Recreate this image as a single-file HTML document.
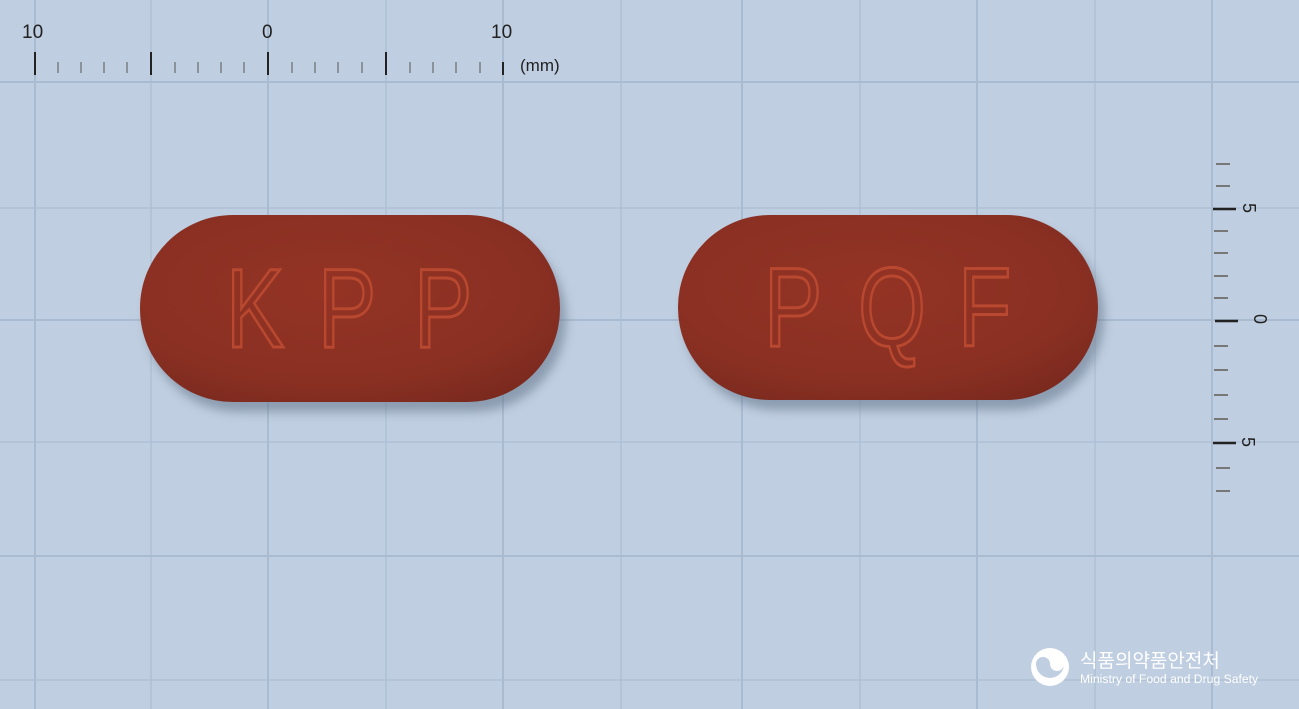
<!DOCTYPE html>
<html><head><meta charset="utf-8"><style>
html,body{margin:0;padding:0;width:1299px;height:709px;overflow:hidden;background:#bfcee0;}
svg{display:block}
</style></head><body>
<svg width="1299" height="709" viewBox="0 0 1299 709" xmlns="http://www.w3.org/2000/svg">
<defs>
<radialGradient id="pg" cx="0.45" cy="0.4" r="0.7">
<stop offset="0" stop-color="#933324"/><stop offset="0.7" stop-color="#8a3023"/><stop offset="1" stop-color="#7a291e"/>
</radialGradient>
<filter id="sh" x="-10%" y="-20%" width="120%" height="150%"><feGaussianBlur stdDeviation="5"/></filter>
</defs>
<g stroke="#a9bbd0" stroke-width="2">
<line x1="35" y1="0" x2="35" y2="709"/><line x1="151" y1="0" x2="151" y2="709" stroke-width="1"/>
<line x1="268" y1="0" x2="268" y2="709"/><line x1="386" y1="0" x2="386" y2="709" stroke-width="1"/>
<line x1="503" y1="0" x2="503" y2="709"/><line x1="621" y1="0" x2="621" y2="709" stroke-width="1"/>
<line x1="742" y1="0" x2="742" y2="709"/><line x1="860" y1="0" x2="860" y2="709" stroke-width="1"/>
<line x1="977" y1="0" x2="977" y2="709"/><line x1="1095" y1="0" x2="1095" y2="709" stroke-width="1"/>
<line x1="1212" y1="0" x2="1212" y2="709"/>
<line x1="0" y1="82" x2="1299" y2="82"/><line x1="0" y1="208" x2="1299" y2="208" stroke-width="1"/>
<line x1="0" y1="320" x2="1299" y2="320"/><line x1="0" y1="442" x2="1299" y2="442" stroke-width="1"/>
<line x1="0" y1="556" x2="1299" y2="556"/><line x1="0" y1="680" x2="1299" y2="680" stroke-width="1"/>
</g>
<g font-family="Liberation Sans, sans-serif" font-size="19" fill="#222">
<text x="22" y="38">10</text><text x="262" y="38">0</text><text x="491" y="38">10</text>
<text x="520" y="71" font-size="17">(mm)</text>
</g>
<g stroke="#222" stroke-width="2">
<line x1="35" y1="52" x2="35" y2="75"/><line x1="151" y1="52" x2="151" y2="75"/><line x1="268" y1="52" x2="268" y2="75"/><line x1="386" y1="52" x2="386" y2="75"/><line x1="503" y1="62" x2="503" y2="75"/>
</g>
<g stroke="#555" stroke-width="1">
<line x1="58" y1="62" x2="58" y2="73"/><line x1="81" y1="62" x2="81" y2="73"/><line x1="104" y1="62" x2="104" y2="73"/><line x1="127" y1="62" x2="127" y2="73"/>
<line x1="175" y1="62" x2="175" y2="73"/><line x1="198" y1="62" x2="198" y2="73"/><line x1="221" y1="62" x2="221" y2="73"/><line x1="244" y1="62" x2="244" y2="73"/>
<line x1="292" y1="62" x2="292" y2="73"/><line x1="315" y1="62" x2="315" y2="73"/><line x1="338" y1="62" x2="338" y2="73"/><line x1="362" y1="62" x2="362" y2="73"/>
<line x1="410" y1="62" x2="410" y2="73"/><line x1="433" y1="62" x2="433" y2="73"/><line x1="456" y1="62" x2="456" y2="73"/><line x1="480" y1="62" x2="480" y2="73"/>
</g>
<g stroke="#777" stroke-width="2">
<line x1="1216" y1="164" x2="1230" y2="164"/><line x1="1216" y1="186" x2="1230" y2="186"/>
<line x1="1214" y1="231" x2="1228" y2="231"/><line x1="1214" y1="253" x2="1228" y2="253"/><line x1="1214" y1="276" x2="1228" y2="276"/><line x1="1214" y1="298" x2="1228" y2="298"/>
<line x1="1214" y1="346" x2="1228" y2="346"/><line x1="1214" y1="370" x2="1228" y2="370"/><line x1="1214" y1="395" x2="1228" y2="395"/><line x1="1214" y1="419" x2="1228" y2="419"/>
<line x1="1216" y1="468" x2="1230" y2="468"/><line x1="1216" y1="491" x2="1230" y2="491"/>
</g>
<g stroke="#222" stroke-width="2.5">
<line x1="1213" y1="209" x2="1236" y2="209"/><line x1="1215" y1="321" x2="1238" y2="321"/><line x1="1213" y1="443" x2="1236" y2="443"/>
</g>
<g font-family="Liberation Sans, sans-serif" font-size="18" fill="#222">
<text transform="translate(1243,203) rotate(90)">5</text>
<text transform="translate(1254,314) rotate(90)">0</text>
<text transform="translate(1242,437) rotate(90)">5</text>
</g>
<rect x="146" y="226" width="420" height="186" rx="93" fill="#5a6a80" opacity="0.5" filter="url(#sh)"/>
<rect x="684" y="224" width="420" height="186" rx="93" fill="#5a6a80" opacity="0.5" filter="url(#sh)"/>
<rect x="140" y="215" width="420" height="187" rx="93" fill="url(#pg)"/>
<rect x="678" y="215" width="420" height="185" rx="92" fill="url(#pg)"/>
<g font-family="Liberation Sans, sans-serif" font-size="112" fill="none" stroke="#b8482f" stroke-width="3">
<text transform="translate(226,347) scale(0.78,1)">K</text><text transform="translate(318,347) scale(0.78,1)">P</text><text transform="translate(414,347) scale(0.78,1)">P</text>
<text transform="translate(764,346) scale(0.78,1)">P</text><text transform="translate(858,346) scale(0.78,1)">Q</text><text transform="translate(958,346) scale(0.78,1)">F</text>
</g>
<g>
<circle cx="1050" cy="667" r="19" fill="#fff"/>
<path d="M1036 664 a7 7 0 0 1 14 0 a7 7 0 0 0 14 0 a14 14 0 0 1 -28 0z" fill="#bfcee0"/>
<text x="1080" y="667" font-family="Liberation Sans, 'Noto Sans CJK KR', sans-serif" font-size="19" fill="#fff">식품의약품안전처</text>
<text x="1080" y="683" font-family="Liberation Sans, sans-serif" font-size="12.2" fill="#fff">Ministry of Food and Drug Safety</text>
</g>
</svg>
</body></html>
